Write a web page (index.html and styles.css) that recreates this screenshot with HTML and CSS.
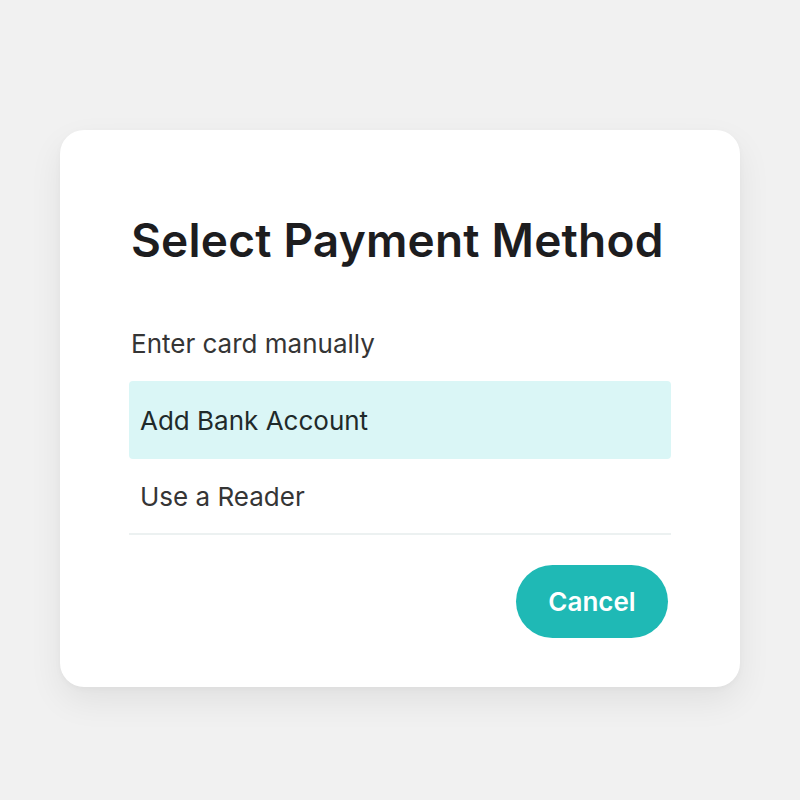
FILE: index.html
```html
<!DOCTYPE html>
<html>
<head>
<meta charset="utf-8">
<link rel="stylesheet" href="styles.css">
</head>
<body>
<div class="card">
  <h1 class="title">Select Payment Method</h1>
  <ul class="options">
    <li class="option first">Enter card manually</li>
    <li class="option active">Add Bank Account</li>
    <li class="option last">Use a Reader</li>
  </ul>
  <div class="actions">
    <button class="cancel">Cancel</button>
  </div>
</div>
</body>
</html>
```
FILE: styles.css
```css
html, body {
  margin: 0;
  padding: 0;
}
body {
  background: #f1f1f1;
  width: 800px;
  height: 800px;
  font-family: Inter, "Noto Sans", sans-serif;
  padding-top: 130px;
  box-sizing: border-box;
}
.card {
  margin-left: 60px;
  width: 680px;
  height: 557px;
  background: #ffffff;
  border-radius: 24px;
  box-shadow: 0 14px 34px rgba(0, 0, 0, 0.07), 0 2px 6px rgba(0, 0, 0, 0.03);
  padding: 82px 69px 0 69px;
  box-sizing: border-box;
}
.title {
  margin: 0 0 0 2px;
  font-size: 46px;
  font-weight: 600;
  color: #1d1d1f;
  line-height: 56px;
  letter-spacing: 0.2px;
}
.options {
  list-style: none;
  margin: 0;
  padding: 0;
  margin-top: 37px;
}
.option {
  font-size: 26px;
  color: #353535;
  height: 76px;
  display: flex;
  align-items: center;
  padding-left: 11px;
  box-sizing: border-box;
}
.option.first {
  padding-left: 2px;
}
.option.active {
  background: #daf6f6;
  border-radius: 4px;
  color: #1f2a2a;
  height: 78px;
}
.option.last {
  border-bottom: 2px solid #ecf1f1;
}
.actions {
  display: flex;
  justify-content: flex-end;
  margin-top: 30px;
  padding-right: 3px;
}
.cancel {
  width: 152px;
  height: 73px;
  border: none;
  border-radius: 37px;
  background: #1fb9b5;
  color: #ffffff;
  font-family: Inter, "Noto Sans", sans-serif;
  font-size: 26px;
  font-weight: 600;
}
```
